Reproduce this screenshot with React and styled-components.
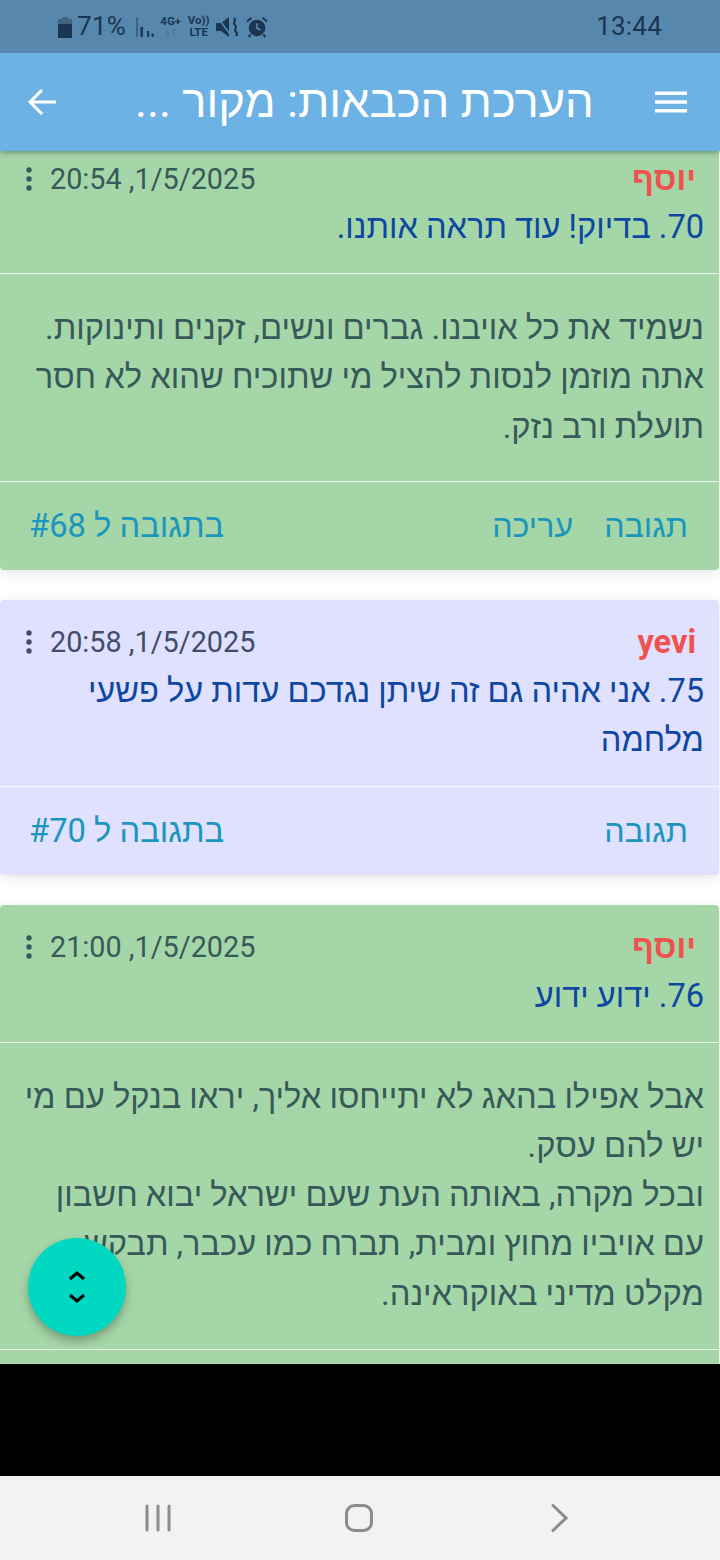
import React from 'react';
import styled, { createGlobalStyle } from 'styled-components';

const GlobalStyle = createGlobalStyle`
    html, body {
        margin: 0;
        padding: 0;
        background: #fff;
    }
    * {
        box-sizing: border-box;
    }
`;

const Screen = styled.div`
    position: relative;
    width: 720px;
    height: 1560px;
    display: flex;
    flex-direction: column;
    overflow: hidden;
    font-family: 'Roboto', 'Liberation Sans', sans-serif;
`;

const StatusBar = styled.div`
    position: relative;
    z-index: 3;
    flex: 0 0 53px;
    display: flex;
    align-items: center;
    justify-content: space-between;
    padding: 0 58px 0 58px;
    background: #5787ad;
    color: #1a3650;
`;

const StatusLeft = styled.div`
    display: flex;
    align-items: center;
`;

const StatusText = styled.span`
    font-size: 26px;
    letter-spacing: 0.3px;
    line-height: 53px;
    margin-left: ${p => p.$left || 0}px;
`;

const TinyStack = styled.div`
    display: flex;
    flex-direction: column;
    align-items: center;
    margin-left: ${p => p.$left}px;
    font-size: 11.5px;
    font-weight: 700;
    line-height: 11.5px;
    width: 21px;
    white-space: nowrap;
`;

const TinyArrows = styled.span`
    color: #3f627f;
    font-size: 12px;
    line-height: 10px;
`;

const StatusIcon = styled.svg`
    display: block;
    margin-left: ${p => p.$left || 0}px;
`;

const Clock = styled.span`
    font-size: 26px;
    letter-spacing: 0.2px;
    line-height: 53px;
`;

const AppBar = styled.header`
    position: relative;
    z-index: 2;
    flex: 0 0 98px;
    display: flex;
    align-items: center;
    padding: 0 32px 0 26px;
    background: #6cb2e4;
    color: #fff;
    box-shadow: 0 2px 5px rgba(0, 0, 0, 0.3);
`;

const AppTitle = styled.h1`
    flex: 1;
    margin: 0 0 0 76px;
    direction: rtl;
    text-align: left;
    font-size: 45.4px;
    font-weight: 400;
    line-height: 98px;
    white-space: nowrap;
    color: #fff;
`;

const MenuButton = styled.svg`
    display: block;
    margin-left: 40px;
`;

const Viewport = styled.main`
    flex: 1;
    overflow: hidden;
    background: #fff;
`;

const Feed = styled.div`
    display: flex;
    flex-direction: column;
    gap: 29.7px;
    margin-top: -14.5px;
    padding-right: 1px;
    direction: rtl;
`;

const Card = styled.article`
    background: ${p => (p.$own ? '#a5d6a7' : '#e0e0ff')};
    color: ${p => (p.$own ? '#37595a' : '#434d6b')};
    border-radius: 4px;
    box-shadow: 0 3px 14px rgba(0, 0, 0, 0.1);
`;

const CardHead = styled.div`
    padding: 20px 15px 21.2px 16px;
`;

const MetaRow = styled.div`
    display: flex;
    align-items: center;
    justify-content: space-between;
    height: 44px;
    margin-bottom: 2.5px;
    padding: 0 8px 0 7px;
`;

const Author = styled.span`
    font-size: 32.5px;
    font-weight: 700;
    color: #ef5350;
`;

const MetaLeft = styled.div`
    display: flex;
    align-items: center;
    gap: 15px;
`;

const DateText = styled.span`
    font-size: 28.8px;
`;

const Title = styled.div`
    font-size: 32.6px;
    line-height: 49.3px;
    color: #0d47a1;
`;

const CardBody = styled.div`
    border-top: 1px solid rgba(255, 255, 255, 0.75);
    padding: 29.5px 15px 29.5px 16px;
    font-size: 32.7px;
    line-height: 49.3px;
`;

const CardFooter = styled.div`
    display: flex;
    align-items: center;
    justify-content: space-between;
    height: 89px;
    padding: 0 31px 0 29px;
    border-top: 1px solid rgba(255, 255, 255, 0.75);
    font-size: 32.7px;
    color: #1b96bd;
`;

const Actions = styled.div`
    display: flex;
    gap: 31px;
    font-size: 32.2px;
`;

const CutRule = styled.div`
    height: 40px;
    border-top: 1px solid rgba(255, 255, 255, 0.75);
`;

const BlackBand = styled.div`
    flex: 0 0 112px;
    background: #000;
`;

const NavBar = styled.nav`
    flex: 0 0 84px;
    display: grid;
    grid-template-columns: repeat(3, 201px);
    align-items: center;
    justify-items: center;
    padding-left: 57px;
    background: #f2f2f2;
`;

const Fab = styled.button`
    position: absolute;
    left: 28px;
    top: 1238px;
    width: 98px;
    height: 98px;
    padding: 0;
    border: 0;
    border-radius: 50%;
    display: flex;
    align-items: center;
    justify-content: center;
    background: #00d8c1;
    box-shadow: 0 5px 10px rgba(0, 0, 0, 0.28);
`;

const Dots = () => (
    <svg width="12" height="24" viewBox="0 0 12 24">
        <circle cx="6" cy="3" r="2.7" fill="currentColor" />
        <circle cx="6" cy="12" r="2.7" fill="currentColor" />
        <circle cx="6" cy="21" r="2.7" fill="currentColor" />
    </svg>
);

const Post = ({ own, author, date, title, body, actions, replyTo, cut }) => (
    <Card $own={own}>
        <CardHead>
            <MetaRow>
                <Author>{author}</Author>
                <MetaLeft>
                    <DateText>{date}</DateText>
                    <Dots />
                </MetaLeft>
            </MetaRow>
            <Title>{title}</Title>
        </CardHead>
        {body && (
            <CardBody>
                {body.map(line => <div key={line}>{line}</div>)}
            </CardBody>
        )}
        {cut ? <CutRule /> : (
            <CardFooter>
                <Actions>
                    {actions.map(a => <span key={a}>{a}</span>)}
                </Actions>
                <span>בתגובה ל #{replyTo}</span>
            </CardFooter>
        )}
    </Card>
);

export default function App() {
    return (
        <Screen>
            <GlobalStyle />
            <StatusBar>
                <StatusLeft>
                    <StatusIcon width="14" height="22" viewBox="0 0 14 22">
                        <path d="M4 1h6v2h4v19H0V3h4z" fill="#3f627f" />
                        <path d="M0 8h14v14H0z" fill="#1a3650" />
                    </StatusIcon>
                    <StatusText $left={5}>71%</StatusText>
                    <StatusIcon $left={10} width="18" height="20" viewBox="0 0 18 20">
                        <path d="M0 0h2v20H0z" fill="#3f627f" />
                        <path d="M4.5 10H7v10H4.5zM11 14h2.2v6H11zM15.5 16.5h2.2V20h-2.2z" fill="#1a3650" />
                    </StatusIcon>
                    <TinyStack $left={6}>
                        4G+
                        <TinyArrows>↓↑</TinyArrows>
                    </TinyStack>
                    <TinyStack $left={7}>
                        <span>Vo))</span>
                        LTE
                    </TinyStack>
                    <StatusIcon $left={7} width="22" height="22" viewBox="0 0 22 22">
                        <path d="M0 7h5l8-6v20l-8-6H0z" fill="#1a3650" />
                        <path d="M2 2l12 16" stroke="#5787ad" strokeWidth="1.5" />
                        <path d="M18 2c3 3-2 4 1 7s-2 4 1 7 0 3 0 4" stroke="#1a3650" strokeWidth="2.2" fill="none" />
                    </StatusIcon>
                    <StatusIcon $left={8} width="22" height="22" viewBox="0 0 24 24">
                        <circle cx="12" cy="13" r="9" fill="#1a3650" />
                        <path d="M12 8v5.5l4 1.5" stroke="#5787ad" strokeWidth="1.8" fill="none" />
                        <path d="M1 6l5-4M23 6l-5-4M5 20l-2 3M19 20l2 3" stroke="#1a3650" strokeWidth="2.2" />
                    </StatusIcon>
                </StatusLeft>
                <Clock>13:44</Clock>
            </StatusBar>

            <AppBar>
                <svg width="33" height="32" viewBox="0 0 33 32">
                    <path d="M30 16H4M16 4L4 16l12 12" stroke="#fff" strokeWidth="3" fill="none" />
                </svg>
                <AppTitle>הערכת הכבאות: מקור ...</AppTitle>
                <MenuButton width="34" height="24" viewBox="0 0 34 24">
                    <path d="M1 1.5h32v3.4H1zM1 10.3h32v3.4H1zM1 19.1h32v3.4H1z" fill="#fff" />
                </MenuButton>
            </AppBar>

            <Viewport>
                <Feed>
                    <Post
                        own
                        author="יוסף"
                        date="1/5/2025, 20:54"
                        title="70. בדיוק! עוד תראה אותנו."
                        body={[
                            'נשמיד את כל אויבנו. גברים ונשים, זקנים ותינוקות.',
                            'אתה מוזמן לנסות להציל מי שתוכיח שהוא לא חסר',
                            'תועלת ורב נזק.',
                        ]}
                        actions={['תגובה', 'עריכה']}
                        replyTo={68}
                    />
                    <Post
                        author="yevi"
                        date="1/5/2025, 20:58"
                        title="75. אני אהיה גם זה שיתן נגדכם עדות על פשעי מלחמה"
                        actions={['תגובה']}
                        replyTo={70}
                    />
                    <Post
                        own
                        cut
                        author="יוסף"
                        date="1/5/2025, 21:00"
                        title="76. ידוע ידוע"
                        body={[
                            'אבל אפילו בהאג לא יתייחסו אליך, יראו בנקל עם מי',
                            'יש להם עסק.',
                            'ובכל מקרה, באותה העת שעם ישראל יבוא חשבון',
                            'עם אויביו מחוץ ומבית, תברח כמו עכבר, תבקש',
                            'מקלט מדיני באוקראינה.',
                        ]}
                    />
                </Feed>
            </Viewport>

            <BlackBand />

            <NavBar>
                <svg width="28" height="28" viewBox="0 0 28 28">
                    <path d="M3 2v24M14 2v24M25 2v24" stroke="#8c8c8c" strokeWidth="3" strokeLinecap="round" />
                </svg>
                <svg width="30" height="30" viewBox="0 0 30 30">
                    <rect x="2.5" y="2.5" width="25" height="25" rx="8" stroke="#8c8c8c" strokeWidth="3" fill="none" />
                </svg>
                <svg width="17" height="30" viewBox="0 0 17 30">
                    <path d="M2 2.5L15 15 2 27.5" stroke="#8c8c8c" strokeWidth="3" fill="none" strokeLinecap="round" />
                </svg>
            </NavBar>

            <Fab aria-label="גלילה">
                <svg width="18" height="32" viewBox="0 0 18 32">
                    <path d="M2 8l7-6 7 6M2 24l7 6 7-6" stroke="#000" strokeWidth="3" fill="none" />
                </svg>
            </Fab>
        </Screen>
    );
}
